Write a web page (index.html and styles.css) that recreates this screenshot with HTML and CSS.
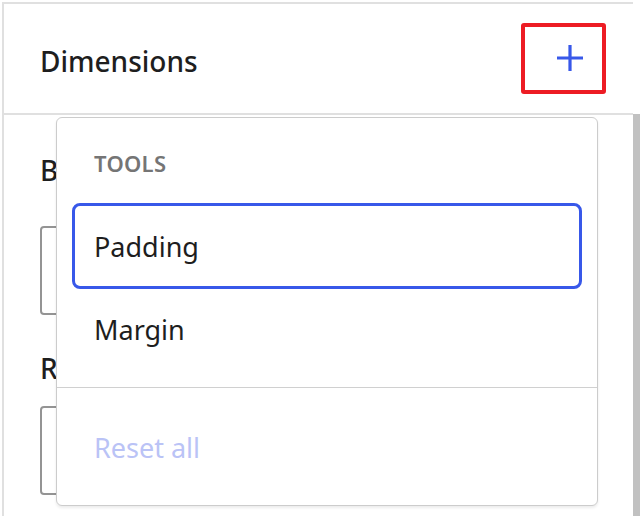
FILE: index.html
```html
<!DOCTYPE html>
<html>
<head>
<meta charset="utf-8">
<link rel="stylesheet" href="styles.css">
</head>
<body>
<div class="frame">
  <div class="main">
    <div class="header">
      <h2 class="title">Dimensions</h2>
      <button class="add-btn" aria-label="Dimensions options">
        <svg width="28" height="28" viewBox="0 0 28 28"><path d="M14 1v26M1 14h26" stroke="#3858e9" stroke-width="3.2" fill="none"/></svg>
      </button>
    </div>
    <div class="content">
      <div class="field first">
        <div class="label">Block spacing</div>
        <div class="input"></div>
      </div>
      <div class="field second">
        <div class="label">Radius</div>
        <div class="input"></div>
      </div>
    </div>
    <div class="menu">
      <div class="group">
        <div class="group-label">TOOLS</div>
        <div class="item focused">Padding</div>
        <div class="item compact">Margin</div>
      </div>
      <div class="group last">
        <div class="item disabled">Reset all</div>
      </div>
    </div>
  </div>
  <div class="scrollbar"></div>
</div>
</body>
</html>
```
FILE: styles.css
```css
html, body {
  margin: 0;
  padding: 0;
  background: #fff;
}
body {
  width: 640px;
  height: 516px;
  overflow: hidden;
  font-family: "Noto Sans", "Open Sans", sans-serif;
  color: #1e1e1e;
}
.frame {
  display: flex;
  width: 640px;
  height: 516px;
  padding-top: 2px;
  box-sizing: border-box;
}
.main {
  position: relative;
  flex: 1 1 auto;
  min-width: 0;
  margin-left: 2px;
  border-left: 2px solid #e0e0e0;
  border-top: 2px solid #e0e0e0;
  box-sizing: border-box;
}
.header {
  height: 111px;
  border-bottom: 2px solid #e0e0e0;
  display: flex;
  align-items: center;
  justify-content: space-between;
  padding: 0 27px 0 36px;
  box-sizing: border-box;
}
.title {
  margin: 0;
  font-size: 28px;
  font-weight: 500;
  padding-top: 5px;
}
.add-btn {
  width: 85px;
  height: 71px;
  margin-bottom: 1px;
  border: 4px solid #ed1c24;
  border-radius: 3px;
  background: #fff;
  display: flex;
  align-items: center;
  justify-content: center;
  padding: 0 0 0 12px;
  box-sizing: border-box;
}
.add-btn svg { display: block; }
.content {
  padding: 37px 0 0 36px;
}
.label {
  white-space: nowrap;
  font-size: 28px;
  font-weight: 500;
  line-height: 36px;
}
.field.first .label { margin-bottom: 38px; }
.field.first { margin-bottom: 35px; }
.field.second .label { margin-bottom: 20px; }
.input {
  width: 400px;
  height: 89px;
  border: 2px solid #949494;
  border-radius: 4px;
  box-sizing: border-box;
}
.menu {
  position: absolute;
  left: 52px;
  top: 113px;
  width: 542px;
  height: 389px;
  box-sizing: border-box;
  background: #fff;
  border: 1.5px solid #cccccc;
  border-radius: 6px;
  box-shadow: 0 2px 3px rgba(0,0,0,0.08);
}
.group {
  padding: 15px 15px 18px;
  border-bottom: 1.5px solid #d0d0d0;
}
.group.last {
  border-bottom: none;
  padding: 16px 15px 14px;
}
.group-label {
  height: 60px;
  display: flex;
  align-items: center;
  padding-left: 22px;
  margin-bottom: 10px;
  font-size: 22px;
  font-weight: 600;
  color: #757575;
  letter-spacing: 0.3px;
}
.item {
  height: 86px;
  display: flex;
  align-items: center;
  padding-left: 22px;
  box-sizing: border-box;
  font-size: 27px;
  color: #1e1e1e;
  border-radius: 8px;
}
.item.focused {
  border: 3px solid #3858e9;
  padding-left: 19px;
}
.item.compact { height: 80px; }
.item.disabled {
  color: #bac3f6;
}
.scrollbar {
  flex: 0 0 7px;
  width: 7px;
  background: linear-gradient(to bottom, #ffffff 0, #ffffff 112px, #c1c1c1 112px, #c1c1c1 100%);
}
```
